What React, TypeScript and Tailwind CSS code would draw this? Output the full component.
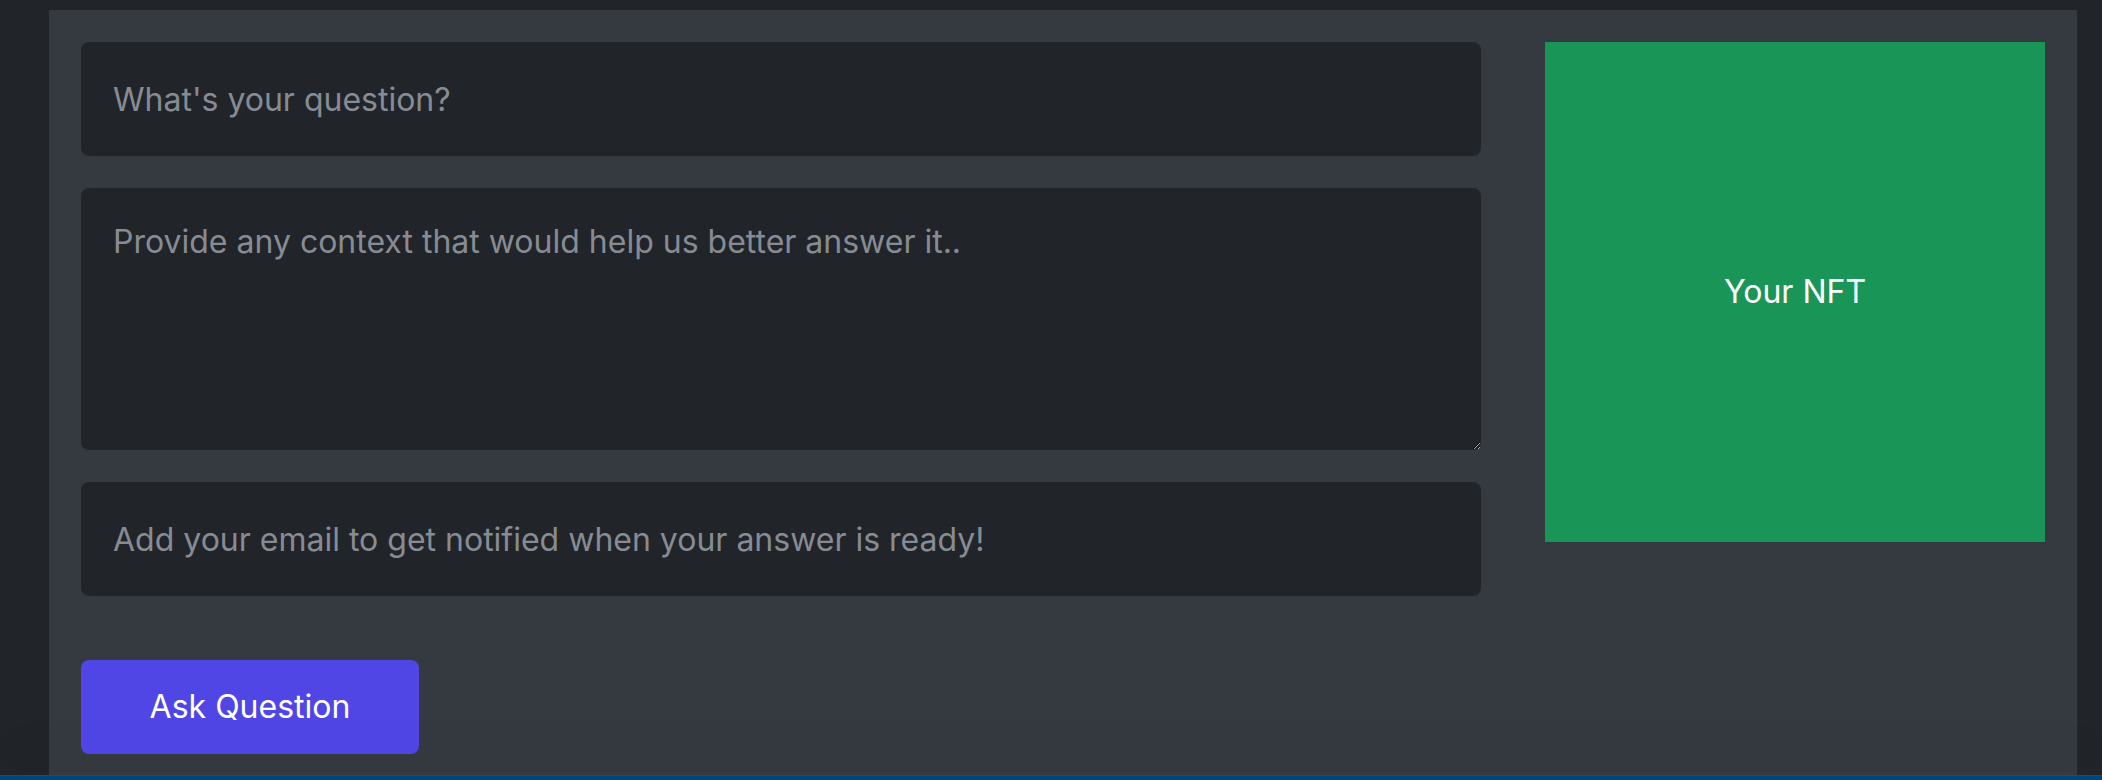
import { useState } from "react";

export default function App() {
  const [question, setQuestion] = useState("");
  const [context, setContext] = useState("");
  const [email, setEmail] = useState("");

  return (
    <div className="h-[780px] overflow-hidden bg-[#212529] flex flex-col font-['Inter',sans-serif]">
      <div className="flex-1 pt-[10px] pl-[49px] pr-[25px] flex flex-col">
        {/* Form panel */}
        <div className="flex-1 flex gap-[64px] bg-[#343a40] px-[32px] pt-[32px]">
          <div className="w-[1400px] flex flex-col">
            <input
              value={question}
              onChange={(e) => setQuestion(e.target.value)}
              placeholder="What's your question?"
              className="h-[114px] rounded-lg bg-[#212529] px-[32px] text-[32px] text-white placeholder:text-[#878c94] outline-none"
            />
            <textarea
              value={context}
              onChange={(e) => setContext(e.target.value)}
              placeholder="Provide any context that would help us better answer it.."
              className="mt-[32px] h-[262px] rounded-lg bg-[#212529] px-[32px] pt-[30px] text-[32px] leading-[1.5] text-white placeholder:text-[#878c94] outline-none [color-scheme:dark]"
            />
            <input
              value={email}
              onChange={(e) => setEmail(e.target.value)}
              placeholder="Add your email to get notified when your answer is ready!"
              className="mt-[32px] h-[114px] rounded-lg bg-[#212529] px-[32px] text-[32px] text-white placeholder:text-[#878c94] outline-none"
            />
            <div className="mt-[64px]">
              <button className="w-[338px] h-[94px] rounded-lg bg-[#4f46e5] text-[32px] text-white">
                Ask Question
              </button>
            </div>
          </div>

          {/* NFT preview */}
          <div className="w-[500px] h-[500px] bg-[#199657] flex items-center justify-center">
            <span className="text-[32px] text-white">Your NFT</span>
          </div>
        </div>
      </div>

      {/* Footer strip */}
      <div className="relative h-[5px] border-t border-[#3d4349] bg-[#00467a] shadow-[0_-30px_40px_rgba(0,0,0,0.08)]" />
    </div>
  );
}
